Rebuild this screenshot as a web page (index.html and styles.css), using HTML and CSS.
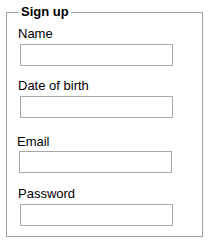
FILE: index.html
```html
<!DOCTYPE html>
<html lang="en">
<head>
  <meta charset="UTF-8">
  <title>Sign up</title>
  <link rel="stylesheet" href="styles.css">
</head>
<body>

<form class="signup">
  <fieldset>
    <legend>Sign up</legend>

    <div class="field field-name">
      <label for="name">Name</label>
      <input type="text" id="name">
    </div>
    <div class="field">
      <label for="dob">Date of birth</label>
      <input type="text" id="dob">
    </div>
    <div class="field field-email">
      <label for="email">Email</label>
      <input type="text" id="email">
    </div>
    <div class="field field-password">
      <label for="password">Password</label>
      <input type="password" id="password">
    </div>
  </fieldset>
</form>

</body>
</html>
```

FILE: styles.css
```css
html, body {
  margin: 0;
  padding: 0;
  background: #fff;
  font-family: "Liberation Sans", Arial, sans-serif;
  font-size: 13px;
  color: #000;
}
.signup {
  margin: 0;
  padding: 4px 0 0 6px;
}
fieldset {
  box-sizing: border-box;
  width: 197px;
  margin: 0;
  padding: 0 0 10px 11px;
  border: 1px solid #a0a0a0;
}
legend {
  margin-left: 1px;
  padding: 0 2px;
  font-weight: bold;
  line-height: 16px;
}
.field {
  margin-top: 12px;
}
.field label {
  display: block;
  line-height: 16px;
}
.field input {
  display: block;
  box-sizing: border-box;
  width: 153px;
  height: 22px;
  margin: 2px 0 0 2px;
  padding: 0 3px;
  border: 1px solid #a9a9a9;
  background: #fff;
  font: inherit;
}
.field-name {
  margin-top: 6px;
}
.field-email {
  margin-top: 16px;
}
.field-email label {
  margin-left: -1px;
}
.field-email input {
  margin: 1px 0 0 1px;
}
.field-password {
  margin-top: 13px;
}
```
